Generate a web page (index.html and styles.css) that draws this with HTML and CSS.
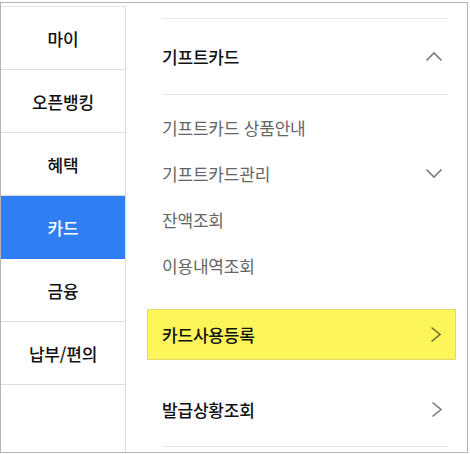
FILE: index.html
```html
<!DOCTYPE html>
<html lang="ko">
<head>
    <meta charset="UTF-8">
    <meta name="viewport" content="width=device-width, initial-scale=1.0">
    <title>카드 메뉴</title>
    <link rel="stylesheet" href="styles.css">
</head>
<body>
    <div class="frame">
        <ul class="side-menu">
            <li>마이</li>
            <li>오픈뱅킹</li>
            <li>혜택</li>
            <li class="active">카드</li>
            <li>금융</li>
            <li>납부/편의</li>
        </ul>

        <div class="sub-menu">
            <div class="top-line"></div>
            <div class="group-title">
                <span>기프트카드</span>
                <svg class="chev" width="18" height="11" viewBox="0 0 18 11"><path d="M1.5 9.5 L9 2 L16.5 9.5" /></svg>
            </div>
            <ul class="group-items">
                <li>기프트카드 상품안내</li>
                <li>
                    <span>기프트카드관리</span>
                    <svg class="chev" width="18" height="11" viewBox="0 0 18 11"><path d="M1.5 1.5 L9 9 L16.5 1.5" /></svg>
                </li>
                <li>잔액조회</li>
                <li>이용내역조회</li>
            </ul>
            <div class="menu-row highlight">
                <span>카드사용등록</span>
                <svg class="chev" width="12" height="17" viewBox="0 0 12 17"><path d="M1.5 1.5 L10 8.5 L1.5 15.5" /></svg>
            </div>
            <div class="menu-row">
                <span>발급상황조회</span>
                <svg class="chev" width="12" height="17" viewBox="0 0 12 17"><path d="M1.5 1.5 L10 8.5 L1.5 15.5" /></svg>
            </div>
        </div>
    </div>
</body>
</html>
```

FILE: styles.css
```css
body {
    margin: 0;
    background-color: #fff;
    font-family: "Noto Sans CJK KR", "Noto Sans", sans-serif;
    font-size: 17px;
    letter-spacing: -0.2px;
}
ul {
    list-style: none;
    margin: 0;
    padding: 0;
}
.frame {
    margin-top: 2px;
    width: 466px;
    height: 449px;
    border: 1px solid #b4b4b4;
    display: grid;
    grid-template-columns: 125px 1fr;
}
.side-menu {
    margin-top: 3px;
    border-top: 1px solid #e4e4e4;
    border-right: 1px solid #dcdcdc;
}
.side-menu li {
    height: 62px;
    border-bottom: 1px solid #dcdcdc;
    display: flex;
    align-items: center;
    justify-content: center;
    font-weight: 500;
    color: #111;
}
.side-menu li.active {
    background-color: #2f7ef3;
    color: #fff;
    border-bottom-color: #2f7ef3;
}
.sub-menu {
    padding: 0 19px 0 36px;
}
.top-line {
    margin-top: 15px;
    height: 1px;
    background-color: #e6e6e6;
}
.group-title {
    height: 75px;
    display: flex;
    align-items: center;
    justify-content: space-between;
    border-bottom: 1px solid #e6e6e6;
    font-weight: 500;
    color: #111;
    padding-right: 5px;
}
.chev {
    fill: none;
    stroke: #7a7a7a;
    stroke-width: 1.6;
}
.group-items {
    padding-top: 9px;
}
.group-items li {
    height: 46px;
    display: flex;
    align-items: center;
    justify-content: space-between;
    color: #666;
    padding-right: 5px;
}
.menu-row {
    height: 74px;
    display: flex;
    align-items: center;
    justify-content: space-between;
    border-bottom: 1px solid #e6e6e6;
    font-weight: 500;
    color: #111;
    padding-right: 5px;
}
.menu-row.highlight {
    margin: 21px -8px 12px -15px;
    height: 49px;
    padding: 0 13px 0 14px;
    background-color: #fcf65a;
    border: 1px solid #e2dc6a;
}
.menu-row.highlight .chev {
    stroke: #6e6a3a;
}
```
